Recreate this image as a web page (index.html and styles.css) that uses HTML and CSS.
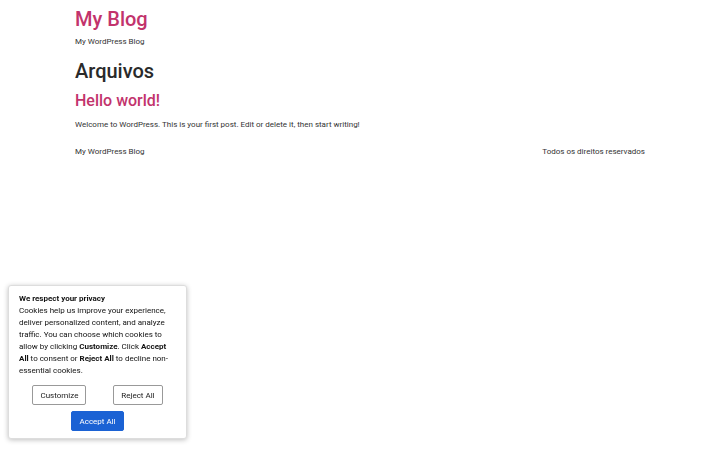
FILE: index.html
```html
<!DOCTYPE html>
<html lang="pt">
<head>
<meta charset="utf-8">
<title>Arquivos – My Blog</title>
<link rel="stylesheet" href="styles.css">
</head>
<body>
<div class="container">
  <header class="site-header">
    <h1 class="site-title">My Blog</h1>
    <p class="site-desc">My WordPress Blog</p>
  </header>
  <main>
    <h1 class="page-title">Arquivos</h1>
    <article>
      <h2 class="post-title">Hello world!</h2>
      <p class="post-text">Welcome to WordPress. This is your first post. Edit or delete it, then start writing!</p>
    </article>
  </main>
  <footer class="site-footer">
    <span>My WordPress Blog</span>
    <span>Todos os direitos reservados</span>
  </footer>
</div>
<div class="cookie">
  <p class="cookie-title">We respect your privacy</p>
  <p class="cookie-text">Cookies help us improve your experience, deliver personalized content, and analyze traffic. You can choose which cookies to allow by clicking <b>Customize</b>. Click <b>Accept All</b> to consent or <b>Reject All</b> to decline non-essential cookies.</p>
  <div class="cookie-row">
    <button class="btn">Customize</button>
    <button class="btn">Reject All</button>
  </div>
  <div class="cookie-row center">
    <button class="btn primary">Accept All</button>
  </div>
</div>
</body>
</html>
```
FILE: styles.css
```css
* { box-sizing: border-box; }
html, body { margin: 0; padding: 0; background: #fff; }
body { font-family: Roboto, "Liberation Sans", sans-serif; color: #333; }
.container { width: 570px; margin: 0 auto; padding-top: 5px; }
.site-title { margin: 0; font-size: 20px; font-weight: 500; color: #c2336c; line-height: 28px; }
.site-desc { margin: 3px 0 0; font-size: 8px; line-height: 12px; color: #333; }
.page-title { margin: 9px 0 0; font-size: 20px; font-weight: 500; line-height: 28px; color: #2a2a2a; }
.post-title { margin: 5px 0 0; font-size: 16px; font-weight: 500; line-height: 22px; color: #c2336c; }
.post-text { margin: 7px 0 0; font-size: 8px; line-height: 12px; color: #333; }
.site-footer { margin-top: 15px; display: flex; justify-content: space-between; font-size: 8px; line-height: 12px; color: #333; }
.cookie { position: fixed; left: 8px; top: 285px; width: 179px; height: 154px; background: #fff; border: 1px solid #ddd; border-radius: 3px; box-shadow: 0 1px 5px rgba(0,0,0,0.25); padding: 7px 10px; font-size: 8px; line-height: 12px; color: #111; }
.cookie p { margin: 0; }
.cookie-title { font-weight: 700; }
.cookie-row { display: flex; justify-content: space-around; margin-top: 8px; }
.cookie-row.center { justify-content: center; margin-top: 6px; }
.btn { font-family: Roboto, "Liberation Sans", sans-serif; font-size: 8px; height: 20px; padding: 0 7px; background: #fff; color: #222; border: 1px solid #999; border-radius: 2px; }
.btn.primary { background: #1b62d4; border-color: #1b62d4; color: #fff; }
```
